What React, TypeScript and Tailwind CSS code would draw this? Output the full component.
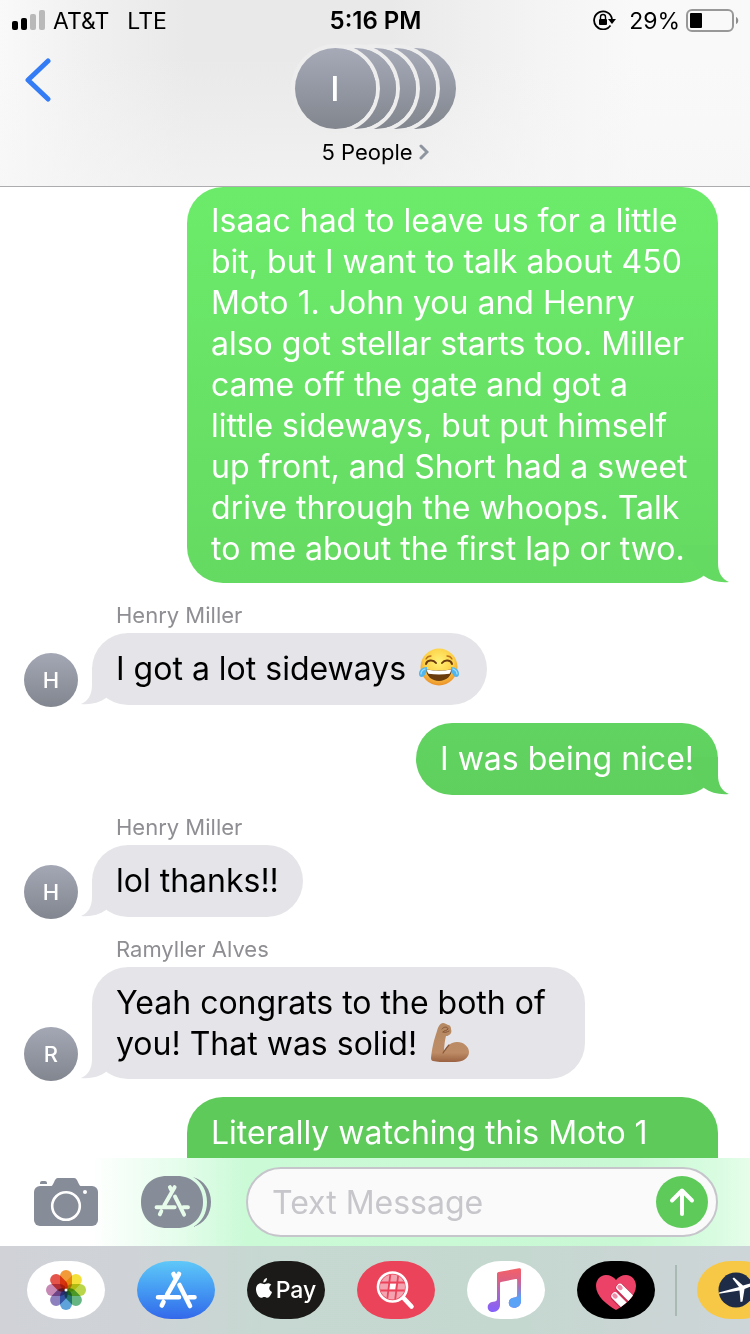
import type { ReactNode } from 'react';

type Message = {
  id: number;
  from?: string;
  lines: ReactNode[];
  tone?: string;
  tailColor?: string;
  pad?: string;
  width?: string;
};

function JoyEmoji() {
  return (
    <svg className="inline-block w-10 h-10 mx-1 align-middle -mt-2" viewBox="0 0 40 40" role="img" aria-label="😂">
      <defs>
        <radialGradient id="joy" cx="0.5" cy="0.35" r="0.65">
          <stop offset="0" stopColor="#fff176" />
          <stop offset="0.6" stopColor="#fdd147" />
          <stop offset="1" stopColor="#eb8f2a" />
        </radialGradient>
      </defs>
      <circle cx="20" cy="20" r="18.5" fill="url(#joy)" />
      <path d="M7 17c1-4 7-5 10-1M33 17c-1-4-7-5-10-1" fill="none" stroke="#6b3a10" strokeWidth="2" strokeLinecap="round" />
      <path d="M7 12c1-2 3-3 5-3M33 12c-1-2-3-3-5-3" fill="none" stroke="#b8701c" strokeWidth="1.3" strokeLinecap="round" />
      <path d="M7 22c8 2 18 2 26 0 0 7-6 12-13 12S7 29 7 22z" fill="#6a3b0c" />
      <path d="M8 22.500c8 1.700 16 1.700 24 0 0 2-.6 3-1.400 4.200-7 1-14 1-21.200 0C8.600 25.500 8 24.500 8 22.500z" fill="#fff" />
      <path d="M8 20c-5 0-8 3-8 7 0 3 3 4 5 2 2-2 3-5 3-9zM32 20c5 0 8 3 8 7 0 3-3 4-5 2-2-2-3-5-3-9z" fill="#52b6ee" />
      <path d="M6 22c-3 1-4 3-4 5M34 22c3 1 4 3 4 5" fill="none" stroke="#a6e0fb" strokeWidth="1.200" strokeLinecap="round" />
    </svg>
  );
}

function FlexEmoji() {
  return (
    <svg className="inline-block w-10 h-10 mx-1 align-middle -mt-2" viewBox="0 0 40 40" role="img" aria-label="💪🏽">
      <defs>
        <linearGradient id="arm" x1="0" y1="0" x2="0" y2="1">
          <stop offset="0" stopColor="#b58a63" />
          <stop offset="0.75" stopColor="#bd8c66" />
          <stop offset="1" stopColor="#99603f" />
        </linearGradient>
      </defs>
      <path
        d="M7 9c1-4 3-8 6-8 2 0 3 1 5 2 2 0 3 2 3 4 1 3 0 5-2 6-1 1-2 1-3 1-1 4-2 10-2 16 3-6 7-10 13-10 7 0 12 5 12 10 0 6-6 10-14 10-8 1-17 0-22-1-1 0-2-1-2-3 1-9 2-15 6-27z"
        fill="url(#arm)"
      />
      <path d="M13 31c2-3 4-6 6-8" fill="none" stroke="#875536" strokeWidth="1.200" strokeLinecap="round" />
      <path d="M12 7c2-3 6-2 6 0-1 2-4 1-5 3M13 10c2 1 4 0 6-1" fill="none" stroke="#875536" strokeWidth="1" strokeLinecap="round" />
    </svg>
  );
}

const messages: Message[] = [
  {
    id: 1,
    lines: [
      'Isaac had to leave us for a little',
      'bit, but I want to talk about 450',
      'Moto 1. John you and Henry',
      'also got stellar starts too. Miller',
      'came off the gate and got a',
      'little sideways, but put himself',
      'up front, and Short had a sweet',
      'drive through the whoops. Talk',
      'to me about the first lap or two.',
    ],
    tone: 'bg-linear-to-b from-[#6ceb6a] to-[#65da62]',
    tailColor: '#65da62',
    pad: 'pt-[13px] pb-[14px]',
    width: 'w-[531px]',
  },
  { id: 2, from: 'Henry Miller', lines: [<>I got a lot sideways <JoyEmoji /></>] },
  { id: 3, lines: ['I was being nice!'], tone: 'bg-linear-to-b from-[#61d360] to-[#5fd05e]', tailColor: '#5fd05e' },
  { id: 4, from: 'Henry Miller', lines: ['lol thanks!!'] },
  {
    id: 5,
    from: 'Ramyller Alves',
    lines: ['Yeah congrats to the both of', <>you! That was solid! <FlexEmoji /></>],
    pad: 'py-[15px]',
    width: 'w-[493px]',
  },
  // taller than the space left, runs on below the composer
  {
    id: 6,
    lines: ['Literally watching this Moto 1'],
    tone: 'bg-[#5dca5a]',
    tailColor: '#5dca5a',
    pad: 'pt-[15px] pb-14',
    width: 'w-[531px]',
  },
];

function Tail({ color, mirrored }: { color: string; mirrored?: boolean }) {
  return (
    <svg
      className={`absolute bottom-0 w-[50px] h-[38px] ${mirrored ? '-left-3 -scale-x-100' : '-right-3'}`}
      viewBox="0 0 50 38"
      aria-hidden="true"
    >
      <path d="M0 0H38V18C38 28 42 34 49 37C40 38 31 36 24 31Z" fill={color} />
    </svg>
  );
}

function Bubble({ message }: { message: Message }) {
  const incoming = Boolean(message.from);
  return (
    <div
      className={`relative max-w-full rounded-[36px] px-6 text-[32px] leading-[41px] whitespace-nowrap ${
        message.pad ?? 'pt-[15px] pb-4'
      } ${message.width ?? ''} ${incoming ? 'bg-[#e5e4e9] text-black' : `${message.tone} text-white`}`}
    >
      <Tail color={incoming ? '#e5e4e9' : message.tailColor ?? '#5dca5a'} mirrored={incoming} />
      <p className="relative">
        {message.lines.map((line, index) => (
          <span key={index} className="block h-[41px]">
            {line}
          </span>
        ))}
      </p>
    </div>
  );
}

function MessageRow({ message }: { message: Message }) {
  if (!message.from) {
    return (
      <li className="flex justify-end pl-6 pr-8">
        <Bubble message={message} />
      </li>
    );
  }

  return (
    <li className="px-6">
      <div className="pl-[92px] mb-1 text-[22px] leading-7 text-[#8e8e93]">{message.from}</div>
      <div className="flex items-end gap-3.5">
        <div className="flex items-center justify-center shrink-0 size-[54px] -mb-0.5 rounded-full bg-linear-to-b from-[#a4a8b5] to-[#82868f] text-[22px] font-medium text-white">
          {message.from[0]}
        </div>
        <Bubble message={message} />
      </div>
    </li>
  );
}

function StatusBar() {
  return (
    <div className="grid grid-cols-[1fr_auto_1fr] items-center h-[42px] pl-3 pr-[11px] text-[23px] text-black">
      <div className="flex items-center gap-2">
        <svg className="w-[33px] h-5 mb-0.5" viewBox="0 0 33 20" aria-hidden="true">
          <rect x="0" y="11" width="6" height="9" rx="2" />
          <rect x="9" y="8" width="6" height="12" rx="2" />
          <rect x="18" y="4" width="6" height="16" rx="2" fill="#b9b9b9" />
          <rect x="27" y="0" width="6" height="20" rx="2" fill="#b9b9b9" />
        </svg>
        <span>AT&amp;T</span>
        <span className="ml-2.5">LTE</span>
      </div>
      <div className="text-2xl font-semibold">5:16 PM</div>
      <div className="flex items-center justify-end gap-1.5">
        <svg className="w-6 h-5 mr-1.5 mb-0.5" viewBox="0 0 24 20" aria-hidden="true">
          <path d="M17.500 15.500A9 9 0 1 1 19 9" fill="none" stroke="#000" strokeWidth="1.800" />
          <path d="M15 9h8l-4 5z" />
          <rect x="6" y="9" width="8" height="6" rx="1" />
          <path d="M7.500 9V7a2.500 2.500 0 0 1 5 0v2" fill="none" stroke="#000" strokeWidth="1.400" />
        </svg>
        <span>29%</span>
        <svg className="w-[53px] h-6" viewBox="0 0 53 24" aria-hidden="true">
          <rect x="1" y="1" width="46" height="21" rx="5" fill="none" stroke="#989898" strokeWidth="2" />
          <rect x="4" y="4" width="12" height="15" rx="1" />
          <path d="M50 8c3 1 3 6 0 7z" fill="#8d8d8d" />
        </svg>
      </div>
    </div>
  );
}

// front avatar first, the rest tucked behind it
const avatarLayers = ['z-50', 'z-40', 'z-30', 'z-20', 'z-10'];

function Header() {
  return (
    <header className="shrink-0 border-b border-[#acacae] bg-[linear-gradient(to_top,rgba(246,246,247,0.6),rgba(246,246,247,0)_70%),linear-gradient(to_right,#f9f9f9,#f0f0f1_12%,#e9e9e9_25%,#e9e9e9_52%,#f4f4f4_72%,#f9f9f9_85%)]">
      <StatusBar />
      <div className="grid grid-cols-[1fr_auto_1fr] items-start h-36">
        <button type="button" aria-label="Back" className="w-14 pl-6 pt-4">
          <svg className="w-7 h-11" viewBox="0 0 28 44" fill="none" aria-hidden="true">
            <path d="M24 3L4 22L24 41" stroke="#347cf6" strokeWidth="5" strokeLinecap="round" strokeLinejoin="round" />
          </svg>
        </button>
        <button type="button" className="flex flex-col items-center pt-1.5">
          <span className="isolate flex">
            {avatarLayers.map((layer, index) => (
              <span
                key={layer}
                className={`relative flex items-center justify-center size-[81px] not-first:-ml-[61px] not-last:ring-4 ring-[#ededed] rounded-full bg-linear-to-b from-[#a6aab8] to-[#82868e] text-[34px] font-medium text-white ${layer}`}
              >
                {index === 0 && 'I'}
              </span>
            ))}
          </span>
          <span className="flex items-center gap-1.5 mt-[11px] text-[22px] leading-6 text-black">
            5 People
            <svg className="w-2.5 h-4" viewBox="0 0 10 16" fill="none" aria-hidden="true">
              <path d="M2 2L8 8L2 14" stroke="#8e959f" strokeWidth="3" strokeLinecap="round" />
            </svg>
          </span>
        </button>
      </div>
    </header>
  );
}

function StoreGlyph() {
  return (
    <g fill="none" stroke="currentColor" strokeWidth="4.600" strokeLinecap="round">
      <path d="M42 13L30 34M26.500 41L24.800 44.500M36.500 13L38.500 17M42.500 24L53 45M21 36.300H42M52 36.300H57.500" />
    </g>
  );
}

function Composer() {
  return (
    <form
      className="flex items-center shrink-0 h-[88px] pl-[34px] pr-8 bg-[linear-gradient(to_right,#ffffff_12%,#e4fdeb_24%,#cafad6_33%,#c9f9d4_85%,#d8fce0_95%,#e6fdea)]"
      onSubmit={(event) => event.preventDefault()}
    >
      <button type="button" aria-label="Camera">
        <svg className="w-16 h-[50px]" viewBox="0 0 64 50" fill="#868c98" aria-hidden="true">
          <rect x="0" y="9" width="64" height="40" rx="6" />
          <path d="M16 10c4-1 4-9 8-9h16c4 0 4 8 8 9z" />
          <path d="M6 7V6q0-2 2-2h3q2 0 2 2v1z" />
          <circle cx="32" cy="29" r="13.800" fill="none" stroke="#fff" strokeWidth="2.600" />
          <circle cx="51" cy="15" r="2" fill="#fff" />
        </svg>
      </button>
      <button type="button" aria-label="Apps" className="ml-[43px] text-[#e6fbea]">
        <svg className="w-[70px] h-[52px]" viewBox="0 0 70 52" aria-hidden="true">
          <path d="M26 0H36C51 0 62 10 62 26S51 52 36 52H26C11 52 0 42 0 26S11 0 26 0Z" fill="#868c98" />
          <path d="M52 1C63 4 70 14 70 26S63 48 52 51C61 46 66 37 66 26S61 6 52 1Z" fill="#868c98" />
          <g transform="translate(-2.500 0) scale(0.860)">
            <StoreGlyph />
          </g>
        </svg>
      </button>
      <div className="flex items-center flex-1 min-w-0 h-[70px] ml-[35px] pl-6 pr-2 rounded-full border-2 border-[#c6c5cb] bg-[#fafafa]">
        <input
          type="text"
          aria-label="Text Message"
          placeholder="Text Message"
          className="flex-1 min-w-0 bg-transparent text-[32px] leading-[41px] text-black placeholder:text-[#c6c6cb] outline-none"
        />
        <button type="submit" aria-label="Send" className="shrink-0 size-[52px] rounded-full bg-[#5dca5a]">
          <svg className="size-[52px]" viewBox="0 0 52 52" fill="none" aria-hidden="true">
            <path d="M26 38V15M16 24.500L26 14.500L36 24.500" stroke="#fff" strokeWidth="4" strokeLinecap="round" strokeLinejoin="round" />
          </svg>
        </button>
      </div>
    </form>
  );
}

const petals = ['#f19a37', '#f3e03a', '#b9d54a', '#66b684', '#5ea3da', '#8d80bf', '#c688b4', '#e4544a'];

function PhotosIcon() {
  return (
    <svg viewBox="0 0 78 58" aria-hidden="true">
      {petals.map((color, index) => (
        <rect
          key={color}
          x="33"
          y="9"
          width="12"
          height="20"
          rx="6"
          fill={color}
          transform={`rotate(${index * 45} 39 29)`}
          className="mix-blend-multiply"
        />
      ))}
      <circle cx="39" cy="29" r="1.500" fill="#fff" />
    </svg>
  );
}

function StoreIcon() {
  return (
    <svg viewBox="0 0 78 58" className="text-white" aria-hidden="true">
      <StoreGlyph />
    </svg>
  );
}

function PayIcon() {
  return (
    <span className="flex items-center justify-center gap-1 h-full text-[23px] font-medium text-white">
      <svg className="w-4 h-5 mb-1" viewBox="0 0 16 20" fill="currentColor" aria-hidden="true">
        <path d="M11 0c.2 2.500-1.700 4.500-3.700 4.500C7 2.300 9 .3 11 0zM15.300 6.800c-3 2-2.500 5.700.7 7.200-.8 2.400-2.600 5.700-4.500 5.800-1.200 0-1.700-.8-3.200-.8s-2 .8-3.200.8C2.700 19.700 0 15.500 0 11.300 0 7.500 2.400 5.300 4.800 5.300c1.500 0 2.600.9 3.500.9.800 0 2.200-1 4-1 1.200.1 2.300.6 3 1.600z" />
      </svg>
      Pay
    </span>
  );
}

function ImagesIcon() {
  return (
    <svg viewBox="0 0 78 58" aria-hidden="true">
      <defs>
        <clipPath id="globe">
          <circle cx="35.500" cy="26" r="12.500" />
        </clipPath>
      </defs>
      <circle cx="35.500" cy="26" r="12.500" fill="#f4a3b0" />
      <g clipPath="url(#globe)">
        <path d="M33 22.500h6l-1 6h-6z" fill="#fff" />
        <path d="M33.500 12L30 40M41.500 12L38 40M22 21.500H50M22 29.500H50" stroke="#eb445a" strokeWidth="1.800" />
      </g>
      <circle cx="35.500" cy="26" r="14.500" fill="none" stroke="#fff" strokeWidth="2.600" />
      <path d="M47 37.500L54.500 45.500" stroke="#fff" strokeWidth="4.600" strokeLinecap="round" />
    </svg>
  );
}

function MusicIcon() {
  return (
    <svg viewBox="0 0 78 58" aria-hidden="true">
      <defs>
        <linearGradient id="music" x1="0" y1="0" x2="0" y2="1">
          <stop offset="0.05" stopColor="#f0606a" />
          <stop offset="0.28" stopColor="#dd6082" />
          <stop offset="0.6" stopColor="#a566d0" />
          <stop offset="1" stopColor="#8460fb" />
        </linearGradient>
        <linearGradient id="musicBlue" x1="0" y1="0" x2="0" y2="1">
          <stop offset="0.15" stopColor="#d65e93" stopOpacity="0" />
          <stop offset="0.75" stopColor="#5aa2f6" />
        </linearGradient>
      </defs>
      <path
        d="M30 13c0-1 .6-1.800 1.700-2L52 7.200c1.300-.3 2 .4 2 1.600V40c0 4-3 6.800-7 6.800-3 0-5.200-2-5.200-4.700 0-3.600 2.600-5 5.700-5.500 2-.4 2.700-.7 2.700-2.600V19.200c0-1-.5-1.300-1.500-1.100L34 21c-.8.200-1 .5-1 1.300V44c0 4-3 7-7 7-3 0-5.300-2-5.300-4.800 0-3.400 2.400-5 5.500-5.500 2.600-.4 3.800-.7 3.800-3z"
        fill="url(#music)"
      />
      <path
        d="M50.200 18V8.500L52 7.200c1.300-.3 2 .4 2 1.600V40c0 4-3 6.800-7 6.800-3 0-5.200-2-5.200-4.700 0-3.600 2.600-5 5.700-5.500 2-.4 2.700-.7 2.700-2.600z"
        fill="url(#musicBlue)"
      />
    </svg>
  );
}

function TouchIcon() {
  const heart = 'M39 49C30 44 19 35 19 25c0-6 4-11 10-11 4 0 8 2 10 5 2-3 6-5 10-5 6 0 10 5 10 11 0 10-11 19-20 24z';
  return (
    <svg viewBox="0 0 78 58" aria-hidden="true">
      <defs>
        <clipPath id="heart">
          <path d={heart} />
        </clipPath>
      </defs>
      <path d={heart} fill="#ec4268" />
      <g clipPath="url(#heart)" strokeLinecap="round">
        <path d="M43 27L62 46M38 35.500L57 54.500" stroke="#c02c50" strokeWidth="9" />
        <path d="M43 26.500L62 45.500M38 35L57 54" stroke="#fff" strokeWidth="7.400" />
        <path d="M42.500 26L43.500 27M37.500 34.500L38.500 35.500" stroke="#f08ca8" strokeWidth="4.400" />
      </g>
    </svg>
  );
}

function TravelIcon() {
  return (
    <svg viewBox="0 0 78 58" aria-hidden="true">
      <circle cx="39" cy="29" r="17.500" fill="#1f2c48" />
      <path d="M22 32.700V31.500L42 26L35.500 17.500L37 16.500L46 24.500L56 21.500V24.500L47.500 28L45.500 40.500L43.500 41L42.500 29.500Z" fill="#fff" />
    </svg>
  );
}

const apps = [
  { name: 'Photos', color: 'bg-white', icon: <PhotosIcon /> },
  { name: 'App Store', color: 'bg-linear-to-b from-[#5fc8f8] to-[#3468ea]', icon: <StoreIcon /> },
  { name: 'Apple Pay', color: 'bg-[#1b1a18]', icon: <PayIcon /> },
  { name: '#images', color: 'bg-[#eb445a]', icon: <ImagesIcon /> },
  { name: 'Music', color: 'bg-white', icon: <MusicIcon /> },
  { name: 'Digital Touch', color: 'bg-black', icon: <TouchIcon /> },
  { name: 'Expedia', color: 'bg-[#f7c846]', icon: <TravelIcon /> },
];

function AppDrawer() {
  return (
    <nav
      aria-label="iMessage apps"
      className="flex items-center shrink-0 h-[88px] pl-[27px] overflow-hidden bg-[linear-gradient(to_right,#d0d2d7,#cfd3d7_18%,#c6d8d1_36%,#c5d8d0_70%,#cad5d4_85%,#cdd5d8)]"
    >
      {apps.map((app, index) => (
        <div key={app.name} className="flex items-center shrink-0">
          {index === 6 && <div className="w-0.5 h-[51px] -ml-3 mr-5 bg-[#a9bab5]" />}
          <button
            type="button"
            aria-label={app.name}
            className={`w-[78px] h-[58px] mr-8 overflow-hidden rounded-[34px/29px] ${app.color}`}
          >
            {app.icon}
          </button>
        </div>
      ))}
    </nav>
  );
}

export default function App() {
  return (
    <div className="flex flex-col h-screen bg-white font-['Inter','Noto_Sans',sans-serif]">
      <Header />
      <main className="flex-1 min-h-0 overflow-hidden">
        <ul className="flex flex-col gap-[18px]">
          {messages.map((message) => (
            <MessageRow key={message.id} message={message} />
          ))}
        </ul>
      </main>
      <Composer />
      <AppDrawer />
    </div>
  );
}
